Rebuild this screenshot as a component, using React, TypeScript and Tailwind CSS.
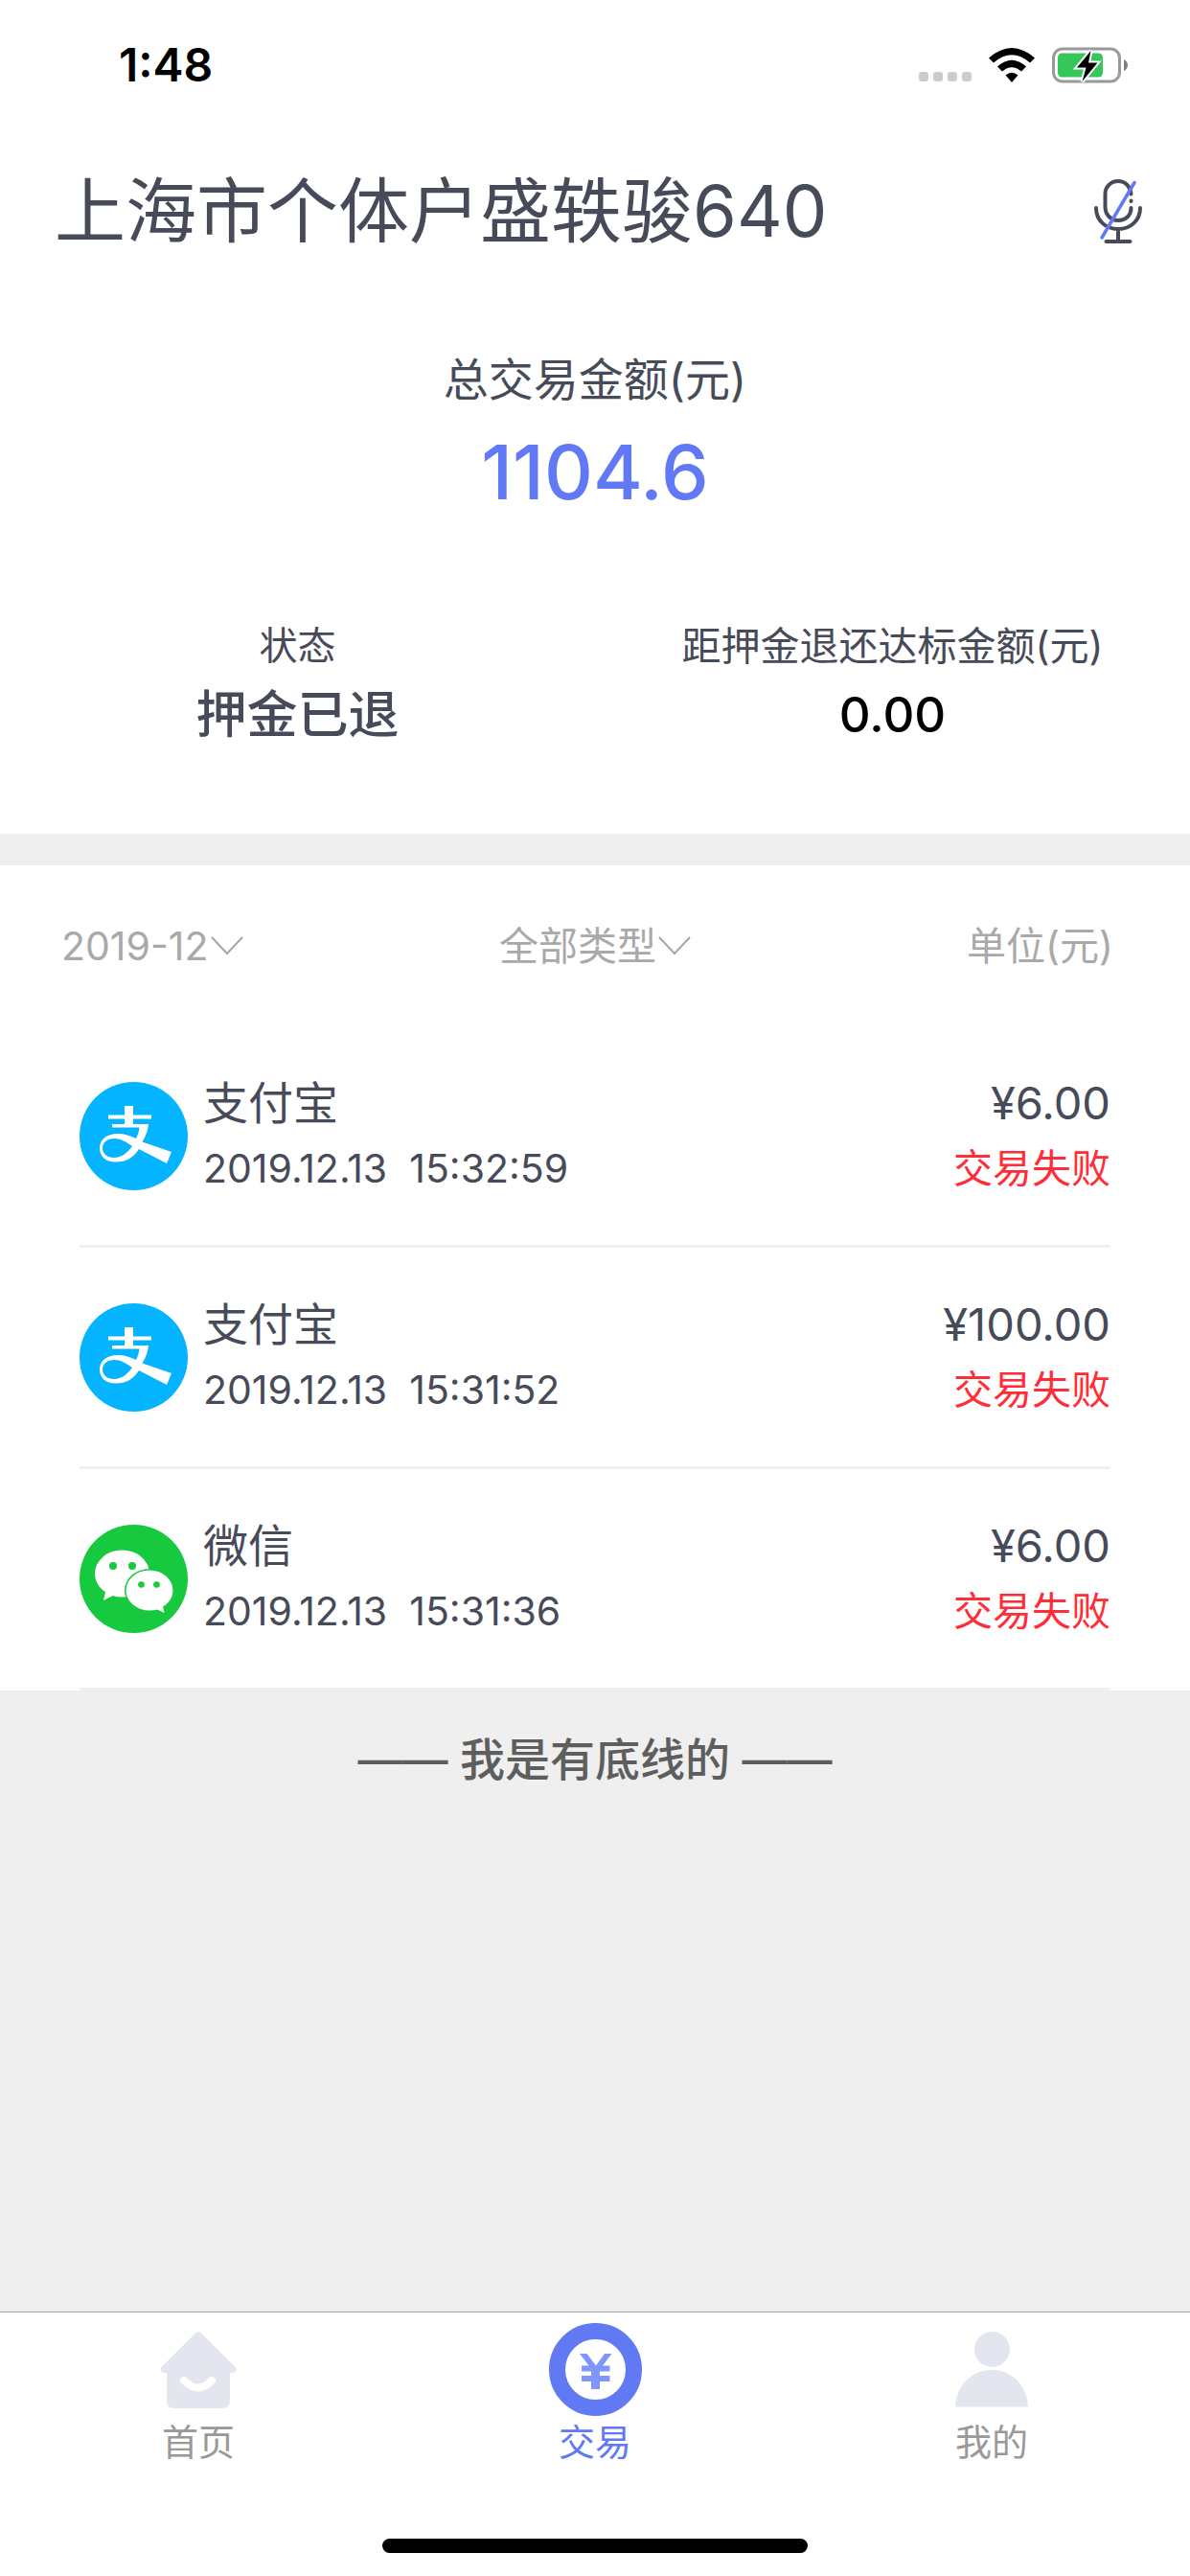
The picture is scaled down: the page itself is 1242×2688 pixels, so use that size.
import React from 'react';

interface Transaction {
  id: number;
  channel: 'alipay' | 'wechat';
  name: string;
  date: string;
  time: string;
  amount: string;
  status: string;
}

const transactions: Transaction[] = [
  { id: 1, channel: 'alipay', name: '支付宝', date: '2019.12.13', time: '15:32:59', amount: '¥6.00', status: '交易失败' },
  { id: 2, channel: 'alipay', name: '支付宝', date: '2019.12.13', time: '15:31:52', amount: '¥100.00', status: '交易失败' },
  { id: 3, channel: 'wechat', name: '微信', date: '2019.12.13', time: '15:31:36', amount: '¥6.00', status: '交易失败' }
];

const AlipayIcon = () => (
  <svg viewBox="0 0 113 113" className="w-[113px] h-[113px] shrink-0" aria-hidden="true">
    <circle cx="56.5" cy="56.5" r="56.5" fill="#05b4ff" />
    <path
      fill="#fff"
      fillRule="evenodd"
      d="M47 25h9v9.500h19v4H56v5.500h16c-.6 7-3 13-6.500 18.500L96 73l-5 12-29-15c-6 9-13 13.500-24 13.500-11 0-17-6-17-14.500S28 54 40 54c7 0 13 2 19 5 2-4 3-7.500 3.500-11.500H34V44h13v-5.500H30v-4h17zM36.500 59C29 59 24 63 24 69s5 10 12 10c8 0 14-5 19-12-7-5-12.500-8-18.500-8z"
    />
  </svg>
);

const WechatIcon = () => (
  <svg viewBox="0 0 113 113" className="w-[113px] h-[113px] shrink-0" aria-hidden="true">
    <circle cx="56.5" cy="56.5" r="56.5" fill="#17c93f" />
    <ellipse cx="44.5" cy="51" rx="28.5" ry="24.5" fill="#fff" />
    <path d="M27.500 68 25 79l10-5z" fill="#fff" />
    <circle cx="35" cy="43" r="4" fill="#17c93f" />
    <circle cx="55" cy="43" r="4" fill="#17c93f" />
    <ellipse cx="73" cy="68.5" rx="26" ry="22.5" fill="#17c93f" />
    <ellipse cx="73" cy="68.5" rx="24.5" ry="21" fill="#fff" />
    <path d="M80 88 88.500 92l-2-9z" fill="#fff" />
    <circle cx="64.5" cy="62.5" r="3.3" fill="#17c93f" />
    <circle cx="80.5" cy="62.5" r="3.3" fill="#17c93f" />
  </svg>
);

const MicOffIcon = () => (
  <svg viewBox="0 0 50 67" className="w-[50px] h-[67px]" fill="none" stroke="#474b59" strokeWidth="4" strokeLinecap="round">
    <path d="M38.500 15.500C38 8 32.500 2 25 2S11.500 8 11.500 15v14C11.500 37 17.500 43 25 43s13.500-5 13.500-13" />
    <path d="M38.500 22.500v.5" />
    <path d="M2 30c0 13 10 22 23 22s23-9 23-22M25 52v12M12.500 65h25" />
    <path d="M42 3.500 8 61" stroke="#6179f5" strokeWidth="3.5" />
  </svg>
);

const Chevron = () => (
  <svg viewBox="0 0 34 20" className="w-[34px] h-5 ml-0.5 pointer-events-none" fill="none" stroke="#a6a6a6" strokeWidth="2">
    <path d="M1 1l16 17L33 1" />
  </svg>
);

const HomeIcon = () => (
  <svg viewBox="0 0 80 80" className="w-20 h-20" aria-hidden="true">
    <path
      fill="#e3e6ee"
      d="M37 1.500q3-3 6 0L78.500 37c2.500 2.500.5 6-2.500 6h-3v29q0 8-8 8H15q-8 0-8-8V43H4c-3 0-5-3.500-2.500-6z"
    />
    <path d="M25 51q15 15 29 0" fill="none" stroke="#fff" strokeWidth="8" strokeLinecap="round" />
  </svg>
);

const CoinIcon = () => (
  <svg viewBox="0 0 97 97" className="w-[97px] h-[97px]" aria-hidden="true">
    <circle cx="48.5" cy="48.5" r="40" fill="none" stroke="#6179f2" strokeWidth="17" />
    <path
      fill="#8096fc"
      d="M32 32h7.500l9.500 12.500L58 32h7.500l-9.500 12.500h7.500v6H53v4.500h10.500v6H53v8h-9v-8H34v-6h10v-4.500H34v-6h7.500z"
    />
  </svg>
);

const UserIcon = () => (
  <svg viewBox="0 0 80 80" className="w-20 h-20" fill="#e3e6ee" aria-hidden="true">
    <circle cx="40.5" cy="18.5" r="18.5" />
    <path d="M2 78C3 56 19 40 40 40s37 16 38 38q0 .5-1 .5H3q-1 0-1-.5z" />
  </svg>
);

const StatusBar = () => (
  <div className="h-[136px] pl-[124px] pr-[64px] flex items-center justify-between">
    <span className="text-[48px] leading-[56px] font-semibold text-black">1:48</span>
    <div className="flex items-center gap-[18px]">
      <div className="flex gap-[5px] pt-6">
        <span className="w-2.5 h-2.5 rounded-[3px] bg-[#cccccc]"></span>
        <span className="w-2.5 h-2.5 rounded-[3px] bg-[#cccccc]"></span>
        <span className="w-2.5 h-2.5 rounded-[3px] bg-[#cccccc]"></span>
        <span className="w-2.5 h-2.5 rounded-[3px] bg-[#cccccc]"></span>
      </div>
      <svg viewBox="0 0 48 36" className="w-12 h-9" aria-hidden="true">
        <path d="M0 10.500Q24-10.500 48 10.500L43 15.500Q24-1 5 15.500z" />
        <path d="M9 19.500Q24 6 39 19.500L34 24.500Q24 16 14 24.500z" />
        <path d="M17.500 28.500Q24 23 30.500 28.500L24 36z" />
      </svg>
      <svg viewBox="0 0 80 38" className="w-20 h-[38px]" aria-hidden="true">
        <rect x="1.5" y="2" width="69" height="34" rx="9.5" fill="none" stroke="#999999" strokeWidth="3" />
        <path d="M75 13q4 2 4 6t-4 6z" fill="#808080" />
        <rect x="6" y="6.5" width="47" height="25" rx="4.5" fill="#35c759" />
        <path d="M40.500 4 26 21.500h9.500L31.500 36 47.500 16.500H38z" fill="#000" stroke="#fff" strokeWidth="4" paintOrder="stroke" />
      </svg>
    </div>
  </div>
);

const tabs = [
  { label: '首页', icon: HomeIcon, active: false },
  { label: '交易', icon: CoinIcon, active: true },
  { label: '我的', icon: UserIcon, active: false }
];

const App: React.FC = () => {
  return (
    <div className="min-h-screen flex flex-col bg-[#efefef] text-[#474b59] font-['Inter','Noto_Sans_CJK_SC',sans-serif]">
      <header className="bg-white">
        <StatusBar />
        <div className="h-[168px] pl-[57px] pr-[50px] flex items-center justify-between">
          <h1 className="text-[74px] leading-[96px]">上海市个体户盛轶骏640</h1>
          <button type="button" aria-label="语音播报">
            <MicOffIcon />
          </button>
        </div>
      </header>

      {/* Summary */}
      <section className="bg-white pt-[60px] pb-[88px] text-center">
        <p className="text-[47px] leading-[64px]">总交易金额(元)</p>
        <p className="mt-4 text-[79px] leading-[96px] font-medium text-[#6179f5]">1104.6</p>
        <div className="mt-[106px] grid grid-cols-2">
          <div>
            <p className="text-[40px] leading-[56px]">状态</p>
            <p className="mt-2 text-[53px] leading-[72px] font-medium">押金已退</p>
          </div>
          <div>
            <p className="text-[41px] leading-[56px]">距押金退还达标金额(元)</p>
            <p className="mt-2 text-[51px] leading-[72px] font-medium text-black">0.00</p>
          </div>
        </div>
      </section>

      {/* Transactions */}
      <section className="mt-[33px] bg-white">
        <div className="h-[168px] px-16 grid grid-cols-3 items-center text-[41px] leading-[56px] text-[#a9a9a9]">
          <div className="flex items-center">
            <select aria-label="月份" className="appearance-none field-sizing-content bg-transparent">
              <option>2019-12</option>
            </select>
            <Chevron />
          </div>
          <div className="flex items-center justify-center">
            <select aria-label="交易类型" className="appearance-none field-sizing-content bg-transparent">
              <option>全部类型</option>
            </select>
            <Chevron />
          </div>
          <p className="pr-4 text-right">单位(元)</p>
        </div>

        <ul className="px-[83px]">
          {transactions.map((item) => (
            <li key={item.id} className="h-[231px] border-b-[3px] border-[#f0f0f0] flex items-center">
              {item.channel === 'alipay' ? <AlipayIcon /> : <WechatIcon />}
              <div className="ml-4 flex-1">
                <p className="text-[47px] leading-[68px]">{item.name}</p>
                <p className="text-[41px] leading-[68px] whitespace-pre">{item.date}{'  '}{item.time}</p>
              </div>
              <div className="text-right">
                <p className="text-[47px] leading-[68px]">{item.amount}</p>
                <p className="text-[41px] leading-[68px] text-[#ff2d37]">{item.status}</p>
              </div>
            </li>
          ))}
        </ul>
      </section>

      <p className="flex-1 pt-10 text-center text-[47px] leading-[64px] font-medium text-[#5e5e5e]">—— 我是有底线的 ——</p>

      {/* Tab bar */}
      <footer className="bg-white border-t border-[#a3a3a3]">
        <nav className="pt-[11px] grid grid-cols-3">
          {tabs.map((tab) => {
            const Icon = tab.icon;
            return (
              <a
                key={tab.label}
                href="#"
                className={`flex flex-col items-center text-[38px] leading-[54px] ${tab.active ? 'text-[#6179f5]' : 'text-[#999999]'}`}
              >
                <span className="h-[97px] flex items-center">
                  <Icon />
                </span>
                {tab.label}
              </a>
            );
          })}
        </nav>
        <div className="mt-[74px] mb-6 mx-auto w-[444px] h-[15px] rounded-full bg-black"></div>
      </footer>
    </div>
  );
};

export default App;
